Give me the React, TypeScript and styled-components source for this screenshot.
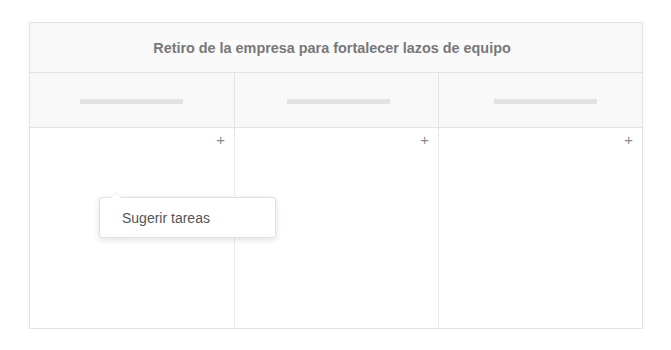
import { FC } from 'react';
import styled, { createGlobalStyle } from 'styled-components';

const GlobalStyle = createGlobalStyle`
  body {
    margin: 0;
    background: #fff;
    font-family: 'Liberation Sans', Arial, sans-serif;
  }
`;

const Page = styled.div`
  padding: 22px 28px 0 29px;
`;

const Board = styled.div`
  width: 614px;
  border: 1px solid #e3e3e3;
  box-shadow: 0 2px 4px rgba(0, 0, 0, 0.05);
  background: #fff;
  box-sizing: border-box;
`;

const TitleBar = styled.div`
  height: 50px;
  display: flex;
  align-items: center;
  justify-content: center;
  background: #f8f8f8;
  border-bottom: 1px solid #e3e3e3;
  box-sizing: border-box;
`;

const Title = styled.h1`
  margin: 0 0 0 -8px;
  font-size: 14.4px;
  font-weight: 700;
  color: #787878;
  background: #fafafa;
`;

const Columns = styled.div`
  display: grid;
  grid-template-columns: 205px 204px 1fr;
`;

const ColumnHead = styled.div<{ $inset: number; $last?: boolean }>`
  height: 55px;
  display: flex;
  align-items: center;
  padding-left: ${(p) => p.$inset}px;
  background: #f8f8f8;
  border-bottom: 1px solid #e3e3e3;
  border-right: ${(p) => (p.$last ? 'none' : '1px solid #e3e3e3')};
  box-sizing: border-box;
`;

const Placeholder = styled.span`
  display: block;
  width: 103px;
  height: 5px;
  margin-top: 2px;
  background: #e2e2e2;
`;

const ColumnBody = styled.div<{ $last?: boolean }>`
  position: relative;
  height: 200px;
  border-right: ${(p) => (p.$last ? 'none' : '1px dotted #d6d6d6')};
  box-sizing: border-box;
`;

const AddButton = styled.button`
  position: absolute;
  top: 3px;
  right: 9px;
  border: none;
  background: none;
  padding: 0;
  font-family: 'Liberation Sans', Arial, sans-serif;
  font-size: 15px;
  line-height: 17px;
  color: #8a8a8a;
  cursor: pointer;
`;

const Popover = styled.div`
  position: absolute;
  left: 69px;
  top: 69px;
  width: 177px;
  height: 41px;
  box-sizing: border-box;
  padding: 0 22px;
  display: flex;
  align-items: center;
  background: #fff;
  border: 1px solid #e0e0e0;
  border-radius: 3px;
  box-shadow: 0 2px 6px rgba(0, 0, 0, 0.12);
  font-size: 14px;
  color: #555;

  &::before,
  &::after {
    content: '';
    position: absolute;
    left: 11px;
    width: 0;
    height: 0;
    border-left: 5px solid transparent;
    border-right: 5px solid transparent;
  }
  &::before {
    top: -6px;
    border-bottom: 6px solid #e0e0e0;
  }
  &::after {
    top: -5px;
    border-bottom: 5px solid #fff;
  }
`;

const columns = [
  { id: 0, inset: 50 },
  { id: 1, inset: 52 },
  { id: 2, inset: 55 },
];

const App: FC = () => {
  return (
    <Page>
      <GlobalStyle />
      <Board>
        <TitleBar>
          <Title>Retiro de la empresa para fortalecer lazos de equipo</Title>
        </TitleBar>
        <Columns>
          {columns.map((c) => (
            <ColumnHead key={c.id} $inset={c.inset} $last={c.id === 2}>
              <Placeholder />
            </ColumnHead>
          ))}
          {columns.map((c) => (
            <ColumnBody key={c.id} $last={c.id === 2}>
              <AddButton>+</AddButton>
              {c.id === 0 && <Popover>Sugerir tareas</Popover>}
            </ColumnBody>
          ))}
        </Columns>
      </Board>
    </Page>
  );
};

export default App;
